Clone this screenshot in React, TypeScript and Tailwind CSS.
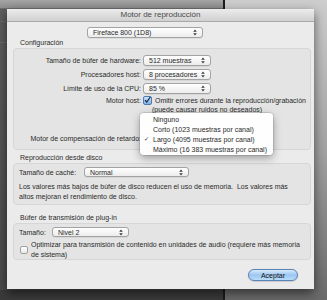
import React from "react";

function Arrows() {
  return (
    <svg width="4" height="7" viewBox="0 0 4 7" className="shrink-0">
      <path d="M0.2 2.8 L2 0.6 L3.8 2.8 Z" fill="#3a3a3a" />
      <path d="M0.2 4.2 L2 6.4 L3.8 4.2 Z" fill="#3a3a3a" />
    </svg>
  );
}

function Popup({ label, className }: { label: string; className: string }) {
  return (
    <div
      className={
        "flex items-center justify-between rounded-[3px] border border-[#a3a3a3] bg-gradient-to-b from-white to-[#ececec] pl-[5px] pr-[5px] shadow-[0_0.5px_0.5px_rgba(0,0,0,0.12)] " +
        className
      }
    >
      <span className="text-[7px] leading-none text-[#2a2a2a]">{label}</span>
      <Arrows />
    </div>
  );
}

function Row({ label, children }: { label: string; children?: React.ReactNode }) {
  return (
    <div className="flex h-[14px] items-center">
      <div className="w-[128px] pr-[1px] text-right text-[7px] leading-none text-[#2a2a2a]">{label}</div>
      <div className="ml-[1px]">{children}</div>
    </div>
  );
}

export default function App() {
  return (
    <div className="relative h-[300px] w-[327px] overflow-hidden bg-[#3e3e3e] [font-family:'Liberation_Sans',Arial,sans-serif]">
      {/* desktop windows behind */}
      <div className="absolute left-0 top-0 h-[300px] w-[223px] bg-gradient-to-b from-[#5e5e5e] to-[#4a4a4a]">
        <div className="h-[9px] border-b border-[#6e6e6e] bg-gradient-to-b from-[#a5a5a5] to-[#8e8e8e]" />
        <div className="mt-[12px] h-px bg-[#6a6a6a]" />
        <div className="mt-[20px] h-px bg-[#6a6a6a]" />
      </div>
      <div className="absolute left-[223px] top-0 h-[300px] w-[2px] bg-[#1c1c1c]" />
      <div className="absolute left-[225px] top-0 h-[300px] w-[102px] bg-gradient-to-b from-[#cdcdcd] via-[#a2a2a2] to-[#6a6a6a]" />
      <div className="absolute left-0 top-[290px] h-[10px] w-[223px] bg-[#3b3b3b]" />

      {/* dialog */}
      <div className="absolute left-[7px] top-[9px] flex h-[280px] w-[307px] flex-col bg-[#ebebeb] shadow-[0_4px_10px_rgba(0,0,0,0.55)]">
        <div className="flex h-[13px] items-center justify-center border-b border-[#a9a9a9] bg-gradient-to-b from-[#ececec] to-[#d0d0d0]">
          <span className="text-[8px] leading-none text-[#4a4a4a]">Motor de reproducción</span>
        </div>

        <Popup label="Fireface 800 (1D8)" className="ml-[80px] mt-[5px] h-[11px] w-[116px]" />

        <div className="ml-[13px] mt-px h-[8px] text-[7px] leading-[8px] text-[#2a2a2a]">Configuración</div>

        <div className="ml-[6px] mr-[3px] mt-px h-[102px] rounded-[4px] border border-[#d6d6d6] bg-[#e4e4e4] pt-[4px]">
          <Row label="Tamaño de búfer de hardware:">
            <Popup label="512 muestras" className="h-[11px] w-[68px]" />
          </Row>
          <Row label="Procesadores host:">
            <Popup label="8 procesadores" className="h-[11px] w-[68px]" />
          </Row>
          <Row label="Límite de uso de la CPU:">
            <Popup label="85 %" className="h-[11px] w-[68px]" />
          </Row>
          <div className="flex h-[10px] items-center">
            <div className="w-[128px] pr-[1px] text-right text-[7px] leading-none text-[#2a2a2a]">Motor host:</div>
            <div className="ml-[1px] flex items-center">
              <div className="flex h-[9px] w-[9px] items-center justify-center rounded-[2px] border border-[#4d7bb3] bg-gradient-to-b from-[#cfe3f8] to-[#7eaee3]">
                <svg width="8" height="8" viewBox="0 0 8 8">
                  <path d="M1.2 4.2 L3.2 6.4 L7.2 0.6" stroke="#10284a" strokeWidth="1.4" fill="none" />
                </svg>
              </div>
              <span className="ml-[3px] text-[7px] leading-none text-[#2a2a2a]">
                Omitir errores durante la reproducción/grabación
              </span>
            </div>
          </div>
          <div className="ml-[138px] h-[10px] text-[7px] leading-[10px] text-[#2a2a2a]">(puede causar ruidos no deseados)</div>
          <div className="mt-[16px]">
            <Row label="Motor de compensación de retardo:">
              <Popup label="" className="h-[11px] w-[68px]" />
            </Row>
          </div>
        </div>

        <div className="ml-[13px] mt-[4px] h-[8px] text-[7px] leading-[8px] text-[#2a2a2a]">Reproducción desde disco</div>

        <div className="ml-[6px] mr-[3px] mt-px h-[42px] rounded-[4px] border border-[#d6d6d6] bg-[#e4e4e4] pl-[5px] pt-[3px]">
          <div className="flex h-[10px] items-center">
            <div className="w-[65px] text-[7px] leading-none text-[#2a2a2a]">Tamaño de caché:</div>
            <Popup label="Normal" className="h-[10px] w-[105px]" />
          </div>
          <p className="mt-[5px] text-[7px] leading-[10px] text-[#2a2a2a]">
            Los valores más bajos de búfer de disco reducen el uso de memoria.&nbsp; Los valores más
            <br />
            altos mejoran el rendimiento de disco.
          </p>
        </div>

        <div className="ml-[13px] mt-[9px] h-[8px] text-[7px] leading-[8px] text-[#2a2a2a]">Búfer de transmisión de plug-in</div>

        <div className="ml-[6px] mr-[3px] mt-px h-[37px] rounded-[4px] border border-[#d6d6d6] bg-[#e4e4e4] pl-[5px] pt-[3px]">
          <div className="flex h-[10px] items-center">
            <div className="w-[33px] text-[7px] leading-none text-[#2a2a2a]">Tamaño:</div>
            <Popup label="Nivel 2" className="h-[10px] w-[77px]" />
          </div>
          <div className="mt-[3px] flex items-center">
            <div className="ml-px h-[8px] w-[8px] shrink-0 rounded-[2px] border border-[#a0a0a0] bg-gradient-to-b from-white to-[#e8e8e8]" />
            <p className="ml-[3px] text-[7px] leading-[10px] text-[#2a2a2a]">
              Optimizar para transmisión de contenido en unidades de audio (requiere más memoria
              <br />
              de sistema)
            </p>
          </div>
        </div>

        <div className="mr-[16px] mt-[9px] flex justify-end">
          <div className="flex h-[12px] w-[50px] items-center justify-center rounded-[6px] border border-[#5a83b8] bg-gradient-to-b from-[#d8ebfc] via-[#9cc6f0] to-[#b9dcfb] shadow-[0_0.5px_1px_rgba(0,0,0,0.25)]">
            <span className="text-[7px] leading-none text-[#111]">Aceptar</span>
          </div>
        </div>

        {/* open popup menu */}
        <div className="absolute left-[133px] top-[104px] w-[133px] rounded-[4px] bg-white/95 py-px shadow-[0_3px_8px_rgba(0,0,0,0.35)] ring-1 ring-black/10">
          {[
            ["", "Ninguno"],
            ["", "Corto (1023 muestras por canal)"],
            ["✓", "Largo (4095 muestras por canal)"],
            ["", "Máximo (16 383 muestras por canal)"],
          ].map(([mark, text]) => (
            <div key={text} className="flex h-[10px] items-center text-[7px] leading-none text-[#2a2a2a]">
              <span className="w-[13px] pl-[4px] text-[6px]">{mark}</span>
              <span>{text}</span>
            </div>
          ))}
        </div>
      </div>
    </div>
  );
}
